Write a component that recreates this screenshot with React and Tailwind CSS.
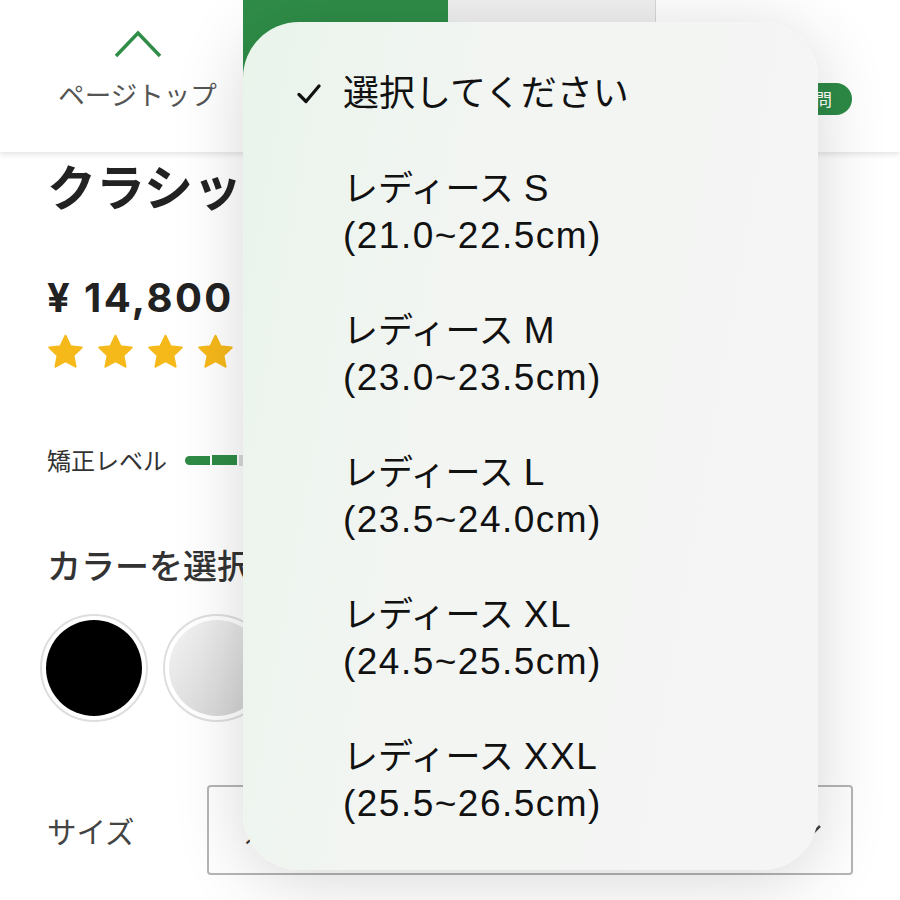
import { useState } from "react";

const SIZES = [
  { name: "レディース", size: "S", range: "(21.0~22.5cm)" },
  { name: "レディース", size: "M", range: "(23.0~23.5cm)" },
  { name: "レディース", size: "L", range: "(23.5~24.0cm)" },
  { name: "レディース", size: "XL", range: "(24.5~25.5cm)" },
  { name: "レディース", size: "XXL", range: "(25.5~26.5cm)" },
];

const jp = { fontFamily: '"Noto Sans CJK JP", "Noto Sans", sans-serif' };
const menuFont = { fontFamily: '"Liberation Sans", "Noto Sans CJK JP", sans-serif' };

function Star() {
  return (
    <svg width="41" height="41" viewBox="0 0 24 24">
      <path
        d="M12 2.2l2.9 6.1 6.6.8-4.9 4.6 1.3 6.6L12 17l-5.9 3.3 1.3-6.6-4.9-4.6 6.6-.8z"
        fill="#f6b91a"
        stroke="#f6b91a"
        strokeWidth="1.2"
        strokeLinejoin="round"
      />
    </svg>
  );
}

export default function App() {
  const [selected] = useState(null);

  return (
    <div className="relative h-[900px] w-[900px] overflow-hidden bg-white text-[#222]" style={jp}>
      <header className="relative z-10 flex h-[152px] bg-white shadow-[0_2px_6px_rgba(0,0,0,0.12)]">
        <div className="flex w-[243px] flex-col items-center pl-[32px] pt-[28px]">
          <svg width="50" height="30" viewBox="0 0 50 30">
            <path d="M3 28 L25 5 L47 28" fill="none" stroke="#2f8d48" strokeWidth="3.5" />
          </svg>
          <span className="mt-[23px] text-[26.5px] leading-none text-[#555]">ページトップ</span>
        </div>
        <div className="w-[205px] bg-[#2f8d48]" />
        <div className="w-[208px] border-r border-[#d8d8d8] bg-[#f1f1f1]" />
        <div className="flex flex-1 items-start justify-end pr-[48px] pt-[83px]">
          <span className="flex h-[32px] items-center rounded-full bg-[#2d8a46] px-[20px] text-[17px] text-white">
            質問
          </span>
        </div>
      </header>

      <main className="px-[47px]">
        <h1 className="mt-[4px] text-[49px] font-bold leading-[58px]">クラシック</h1>
        <p
          className="mt-[60px] text-[40px] font-bold leading-[48px] tracking-[0.06em]"
          style={{ fontFamily: '"Inter", "Noto Sans CJK JP", sans-serif' }}
        >
          ¥ 14,800
        </p>
        <div className="-ml-[2px] mt-[10px] flex h-[40px] items-center gap-[9px]">
          <Star />
          <Star />
          <Star />
          <Star />
          <Star />
        </div>
        <div className="mt-[73px] flex h-[30px] items-center gap-[18px]">
          <span className="text-[24px] leading-[30px] text-[#333]">矯正レベル</span>
          <div className="flex items-center gap-[2px]">
            <span className="h-[9px] w-[25px] rounded-l-full bg-[#2e8b45]" />
            <span className="h-[10px] w-[25px] bg-[#2e8b45]" />
            <span className="h-[11px] w-[25px] bg-[#d9d9d9]" />
            <span className="h-[12px] w-[25px] bg-[#d9d9d9]" />
            <span className="h-[13px] w-[25px] rounded-r-full bg-[#d9d9d9]" />
          </div>
        </div>
        <h2 className="mt-[68px] text-[34px] font-medium leading-[44px] text-[#333]">カラーを選択</h2>
        <div className="-ml-[7px] mt-[27px] flex gap-[15px]">
          <div className="flex h-[108px] w-[108px] items-center justify-center rounded-full border-2 border-[#dedede] bg-white">
            <div className="h-[96px] w-[96px] rounded-full bg-black" />
          </div>
          <div className="flex h-[108px] w-[108px] items-center justify-center rounded-full border-2 border-[#dedede] bg-white">
            <div className="h-[96px] w-[96px] rounded-full bg-[linear-gradient(135deg,#f4f4f4,#cfcfcf)]" />
          </div>
          <div className="flex h-[108px] w-[108px] items-center justify-center rounded-full border-2 border-[#dedede] bg-white">
            <div className="h-[96px] w-[96px] rounded-full bg-[#8a6a4a]" />
          </div>
        </div>
        <div className="mt-[63px] flex items-center">
          <span className="w-[160px] text-[29.5px] text-[#444]">サイズ</span>
          <div className="flex h-[90px] w-[646px] items-center justify-between rounded-[4px] border-2 border-[#b5b5b5] pl-[36px] pr-[30px]">
            <span className="text-[28px] text-[#333]">{selected ?? "選択"}</span>
            <svg width="16" height="10" viewBox="0 0 16 10">
              <path d="M1 1 L8 8 L15 1" fill="none" stroke="#444" strokeWidth="2.5" />
            </svg>
          </div>
        </div>
      </main>

      <div
        className="absolute left-[243px] top-[22px] z-20 h-[848px] w-[575px] rounded-[56px] bg-[linear-gradient(100deg,#e9f4eb_0%,#f2f5f2_35%,#f5f5f5_100%)] pb-[20px] pt-[24px] shadow-[0_10px_70px_rgba(0,0,0,0.16)]"
        style={menuFont}
      >
        <div className="flex items-center py-[24px] text-[36px] leading-[47px] text-[#111]">
          <span className="flex w-[100px] justify-end pr-[22px]">
            <svg width="24" height="20" viewBox="0 0 24 20">
              <path d="M2 10.5 L9 17.5 L22 2" fill="none" stroke="#111" strokeWidth="3.2" strokeLinecap="round" strokeLinejoin="round" />
            </svg>
          </span>
          <span>選択してください</span>
        </div>
        {SIZES.map((s) => (
          <div key={s.size} className="py-[24px] pl-[100px] leading-[47px] text-[#111]">
            <div className="flex items-baseline gap-[10px]">
              <span className="text-[35px]">{s.name}</span>
              <span className="text-[37px] tracking-[0.04em]">{s.size}</span>
            </div>
            <div className="text-[37px] tracking-[0.04em]">{s.range}</div>
          </div>
        ))}
      </div>
    </div>
  );
}
